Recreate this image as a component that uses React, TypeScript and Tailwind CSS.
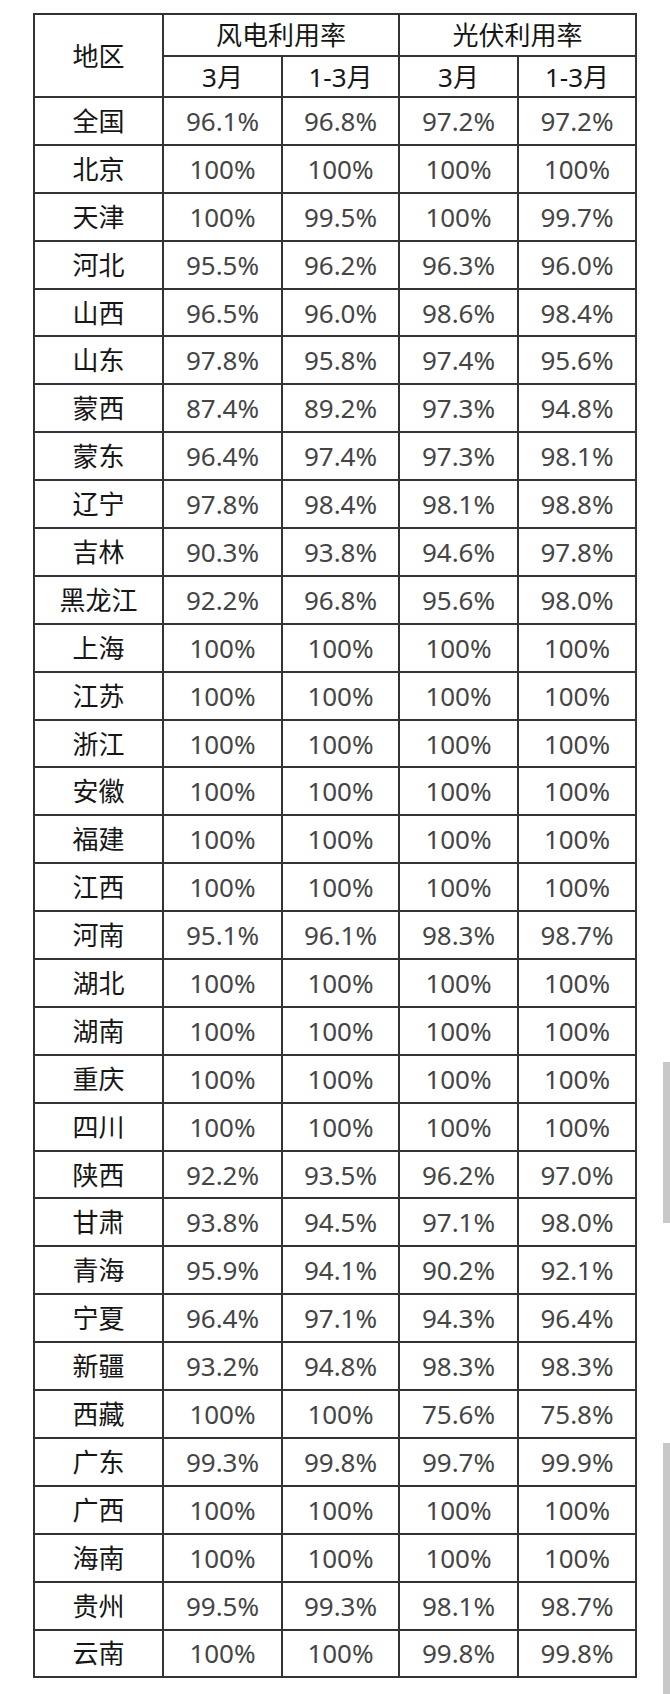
import React from "react";

const rows: [string, string, string, string, string][] = [
  ["全国", "96.1%", "96.8%", "97.2%", "97.2%"],
  ["北京", "100%", "100%", "100%", "100%"],
  ["天津", "100%", "99.5%", "100%", "99.7%"],
  ["河北", "95.5%", "96.2%", "96.3%", "96.0%"],
  ["山西", "96.5%", "96.0%", "98.6%", "98.4%"],
  ["山东", "97.8%", "95.8%", "97.4%", "95.6%"],
  ["蒙西", "87.4%", "89.2%", "97.3%", "94.8%"],
  ["蒙东", "96.4%", "97.4%", "97.3%", "98.1%"],
  ["辽宁", "97.8%", "98.4%", "98.1%", "98.8%"],
  ["吉林", "90.3%", "93.8%", "94.6%", "97.8%"],
  ["黑龙江", "92.2%", "96.8%", "95.6%", "98.0%"],
  ["上海", "100%", "100%", "100%", "100%"],
  ["江苏", "100%", "100%", "100%", "100%"],
  ["浙江", "100%", "100%", "100%", "100%"],
  ["安徽", "100%", "100%", "100%", "100%"],
  ["福建", "100%", "100%", "100%", "100%"],
  ["江西", "100%", "100%", "100%", "100%"],
  ["河南", "95.1%", "96.1%", "98.3%", "98.7%"],
  ["湖北", "100%", "100%", "100%", "100%"],
  ["湖南", "100%", "100%", "100%", "100%"],
  ["重庆", "100%", "100%", "100%", "100%"],
  ["四川", "100%", "100%", "100%", "100%"],
  ["陕西", "92.2%", "93.5%", "96.2%", "97.0%"],
  ["甘肃", "93.8%", "94.5%", "97.1%", "98.0%"],
  ["青海", "95.9%", "94.1%", "90.2%", "92.1%"],
  ["宁夏", "96.4%", "97.1%", "94.3%", "96.4%"],
  ["新疆", "93.2%", "94.8%", "98.3%", "98.3%"],
  ["西藏", "100%", "100%", "75.6%", "75.8%"],
  ["广东", "99.3%", "99.8%", "99.7%", "99.9%"],
  ["广西", "100%", "100%", "100%", "100%"],
  ["海南", "100%", "100%", "100%", "100%"],
  ["贵州", "99.5%", "99.3%", "98.1%", "98.7%"],
  ["云南", "100%", "100%", "99.8%", "99.8%"],
];

const cell = "flex items-center justify-center border-r-2 border-b-2 border-[#333333]";

export default function App() {
  return (
    <div
      className="relative h-[1694px] w-[670px] overflow-hidden bg-white pl-[33px] pt-[13px]"
      style={{ fontFamily: '"Noto Sans", "Noto Sans CJK SC", sans-serif' }}
    >
      <div className="grid w-[604px] grid-cols-[129px_119px_117px_119px_118px] grid-rows-[42px_41px_repeat(33,47.9px)] border-l-2 border-t-2 border-[#333333] text-[26px] leading-none">
        <div className={`${cell} row-span-2 text-[#161616]`}>地区</div>
        <div className={`${cell} col-span-2 text-[#161616]`}>风电利用率</div>
        <div className={`${cell} col-span-2 text-[#161616]`}>光伏利用率</div>
        <div className={`${cell} text-[#161616]`}>3月</div>
        <div className={`${cell} text-[#161616]`}>1-3月</div>
        <div className={`${cell} text-[#161616]`}>3月</div>
        <div className={`${cell} text-[#161616]`}>1-3月</div>
        {rows.map((r) => (
          <React.Fragment key={r[0]}>
            <div className={`${cell} text-[#161616]`}>{r[0]}</div>
            <div className={`${cell} text-[#454545]`}>{r[1]}</div>
            <div className={`${cell} text-[#454545]`}>{r[2]}</div>
            <div className={`${cell} text-[#454545]`}>{r[3]}</div>
            <div className={`${cell} text-[#454545]`}>{r[4]}</div>
          </React.Fragment>
        ))}
      </div>
      <div className="absolute left-[663px] top-[1062px] h-[161px] w-[7px] bg-[#c8c8c8]" />
      <div className="absolute left-[663px] top-[1443px] h-[251px] w-[7px] bg-[#c8c8c8]" />
    </div>
  );
}
